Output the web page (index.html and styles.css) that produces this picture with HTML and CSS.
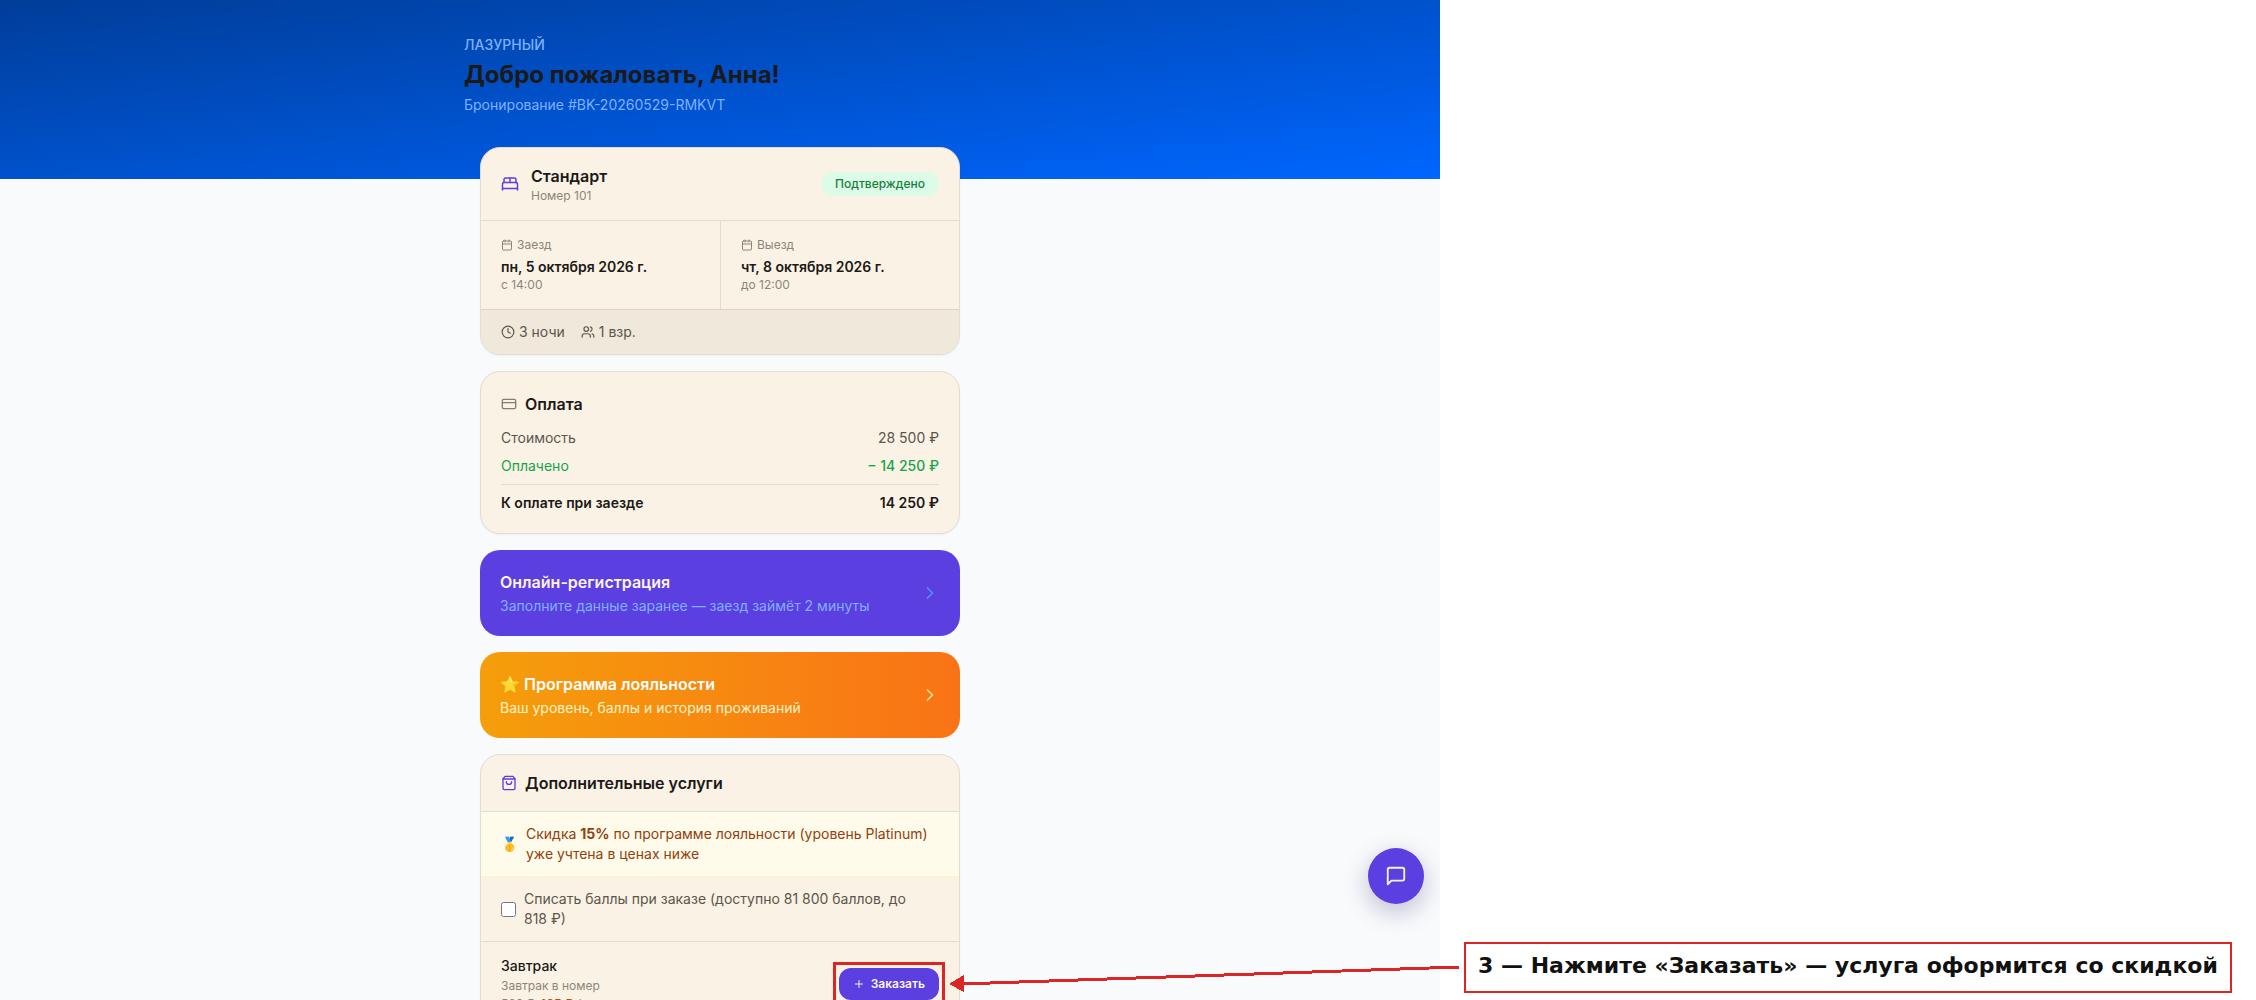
FILE: index.html
```html
<!DOCTYPE html>
<html lang="ru">
<head>
  <meta charset="UTF-8" />
  <meta name="viewport" content="width=device-width, initial-scale=1.0"/>
  <title>Лазурный — бронирование</title>
  <link rel="stylesheet" href="styles.css">
</head>
<body>
  <div class="page">
    <div class="app">
      <header class="hero">
        <div class="hero-inner">
          <p class="hotel">Лазурный</p>
          <h1>Добро пожаловать, Анна!</h1>
          <p class="booking">Бронирование #BK-20260529-RMKVT</p>
        </div>
      </header>

      <main class="cards">
        <!-- Room -->
        <section class="card">
          <div class="room">
            <svg class="icon accent" width="18" height="18" viewBox="0 0 24 24"><path d="M2 20v-8a2 2 0 0 1 2-2h16a2 2 0 0 1 2 2v8"/><path d="M4 10V6a2 2 0 0 1 2-2h12a2 2 0 0 1 2 2v4"/><path d="M12 4v6"/><path d="M2 18h20"/></svg>
            <div class="room-name">
              <h2>Стандарт</h2>
              <p class="small">Номер 101</p>
            </div>
            <span class="badge">Подтверждено</span>
          </div>
          <div class="dates">
            <div class="date">
              <p class="small label"><svg class="icon" width="12" height="12" viewBox="0 0 24 24"><path d="M8 2v4"/><path d="M16 2v4"/><rect width="18" height="18" x="3" y="4" rx="2"/><path d="M3 10h18"/></svg>Заезд</p>
              <p class="day">пн, 5 октября 2026 г.</p>
              <p class="small">с 14:00</p>
            </div>
            <div class="date">
              <p class="small label"><svg class="icon" width="12" height="12" viewBox="0 0 24 24"><path d="M8 2v4"/><path d="M16 2v4"/><rect width="18" height="18" x="3" y="4" rx="2"/><path d="M3 10h18"/></svg>Выезд</p>
              <p class="day">чт, 8 октября 2026 г.</p>
              <p class="small">до 12:00</p>
            </div>
          </div>
          <div class="stay">
            <span><svg class="icon" width="14" height="14" viewBox="0 0 24 24"><circle cx="12" cy="12" r="10"/><path d="M12 6v6l4 2"/></svg>3 ночи</span>
            <span><svg class="icon" width="14" height="14" viewBox="0 0 24 24"><path d="M16 21v-2a4 4 0 0 0-4-4H6a4 4 0 0 0-4 4v2"/><circle cx="9" cy="7" r="4"/><path d="M22 21v-2a4 4 0 0 0-3-3.87"/><path d="M16 3.13a4 4 0 0 1 0 7.75"/></svg>1 взр.</span>
          </div>
        </section>

        <!-- Payment -->
        <section class="card payment">
          <div class="title">
            <svg class="icon muted" width="16" height="16" viewBox="0 0 24 24"><rect width="20" height="14" x="2" y="5" rx="2"/><path d="M2 10h20"/></svg>
            <h2>Оплата</h2>
          </div>
          <dl>
            <div class="row"><dt>Стоимость</dt><dd>28 500 ₽</dd></div>
            <div class="row paid"><dt>Оплачено</dt><dd>− 14 250 ₽</dd></div>
            <div class="row total"><dt>К оплате при заезде</dt><dd>14 250 ₽</dd></div>
          </dl>
        </section>

        <a class="banner checkin" href="#checkin">
          <div>
            <h2>Онлайн-регистрация</h2>
            <p>Заполните данные заранее — заезд займёт 2 минуты</p>
          </div>
          <svg class="icon" width="20" height="20" viewBox="0 0 24 24"><path d="m9 18 6-6-6-6"/></svg>
        </a>

        <a class="banner loyalty" href="#loyalty">
          <div>
            <h2>⭐ Программа лояльности</h2>
            <p>Ваш уровень, баллы и история проживаний</p>
          </div>
          <svg class="icon" width="20" height="20" viewBox="0 0 24 24"><path d="m9 18 6-6-6-6"/></svg>
        </a>

        <!-- Extra services -->
        <section class="card">
          <div class="title services-title">
            <svg class="icon accent" width="16" height="16" viewBox="0 0 24 24"><path d="M6 2 3 6v14a2 2 0 0 0 2 2h14a2 2 0 0 0 2-2V6l-3-4Z"/><path d="M3 6h18"/><path d="M16 10a4 4 0 0 1-8 0"/></svg>
            <h2>Дополнительные услуги</h2>
          </div>
          <div class="discount">
            <span>🥇</span>
            <p>Скидка <b>15%</b> по программе лояльности (уровень Platinum) уже учтена в ценах ниже</p>
          </div>
          <label class="points" for="usePoints">
            <input type="checkbox" id="usePoints">
            <span>Списать баллы при заказе (доступно 81 800 баллов, до 818&nbsp;₽)</span>
          </label>
          <div class="service">
            <div>
              <h3>Завтрак</h3>
              <p class="small">Завтрак в номер</p>
              <p class="small"><s>500 ₽</s> <b class="price">425 ₽</b> /</p>
            </div>
            <div class="target">
              <button class="order" type="button"><svg class="icon" width="12" height="12" viewBox="0 0 24 24"><path d="M5 12h14"/><path d="M12 5v14"/></svg>Заказать</button>
            </div>
          </div>
        </section>
      </main>

      <button class="chat" type="button" aria-label="Чат">
        <svg class="icon" width="22" height="22" viewBox="0 0 24 24"><path d="M21 15a2 2 0 0 1-2 2H7l-4 4V5a2 2 0 0 1 2-2h14a2 2 0 0 1 2 2z"/></svg>
      </button>
    </div>

    <aside class="notes">
      <p class="note">3 — Нажмите «Заказать» — услуга оформится со скидкой</p>
    </aside>

    <svg class="arrow" width="510" height="30" viewBox="0 0 510 30" shape-rendering="crispEdges"><path d="M12 14 510 -3" /><path class="head" d="M0 14 15 5v17z"/></svg>
  </div>
</body>
</html>
```
FILE: styles.css
```css
* { box-sizing: border-box; }
body { margin: 0; background: #fff; color: #1c1917; font-family: Inter, "Noto Sans", sans-serif; font-size: 14px; line-height: 20px; }
h1, h2, h3, p, dl, dd { margin: 0; }
h2 { font-size: 16px; line-height: 24px; font-weight: 600; }
h3 { font-size: 14px; line-height: 20px; font-weight: 500; }
button { font-family: inherit; border: 0; cursor: pointer; }
.icon { flex-shrink: 0; fill: none; stroke: currentColor; stroke-width: 2; stroke-linecap: round; stroke-linejoin: round; }
.accent { color: #5b3fe0; }
.muted { color: #857d72; }
.small { font-size: 12px; line-height: 16px; color: #8c857b; }

.page { position: relative; display: grid; grid-template-columns: 1440fr 816fr; height: 100vh; overflow: hidden; }
.app { position: relative; background: #f8fafc; min-width: 0; height: 100vh; overflow: hidden; }

.hero { padding: 35px 16px 64px; background: linear-gradient(to bottom right, #003d99, #0066ff); color: #7fb0ff; }
.hero-inner { max-width: 512px; margin: 0 auto; }
.hotel { font-weight: 500; text-transform: uppercase; }
h1 { margin: 4px 0; font-size: 24px; line-height: 32px; font-weight: 700; color: #1c1917; }

.cards { position: relative; max-width: 512px; margin: -32px auto 0; padding: 0 16px; display: flex; flex-direction: column; gap: 16px; }
.card { background: #faf3e5; border: 1px solid #e3dccf; border-radius: 20px; overflow: hidden; box-shadow: 0 1px 2px rgba(0, 0, 0, 0.05); }

.room { display: flex; align-items: center; gap: 12px; padding: 16px 20px; }
.room-name { flex: 1; }
.badge { padding: 4px 14px; border-radius: 12px; background: #dcfce7; color: #15803d; font-size: 12px; line-height: 16px; font-weight: 500; }
.dates { display: grid; grid-template-columns: 1fr 1fr; border-top: 1px solid #e3dccf; }
.date { padding: 16px 20px; }
.date + .date { border-left: 1px solid #e3dccf; }
.label { display: flex; align-items: center; gap: 4px; margin-bottom: 4px; }
.day { font-weight: 600; }
.stay { display: flex; gap: 16px; padding: 12px 20px; background: #f0e8db; border-top: 1px solid #ddd3c3; color: #5c554c; }
.stay span { display: flex; align-items: center; gap: 4px; }

.payment { padding: 20px; }
.title { display: flex; align-items: center; gap: 8px; }
dl { display: flex; flex-direction: column; gap: 8px; margin-top: 12px; }
.row { display: flex; justify-content: space-between; color: #5c554c; }
.paid { color: #16a34a; }
.paid dd { font-weight: 500; }
.total { padding-top: 8px; border-top: 1px solid #e3dccf; color: #1c1917; font-weight: 600; }

.banner { display: flex; align-items: center; justify-content: space-between; padding: 20px; border-radius: 20px; text-decoration: none; }
.banner p { margin-top: 2px; }
.checkin { background: #5b3fe0; color: #faf3e5; }
.checkin p { color: #80b0ff; }
.checkin .icon { color: #4d90ff; }
.loyalty { background: linear-gradient(to right, #f59e0b, #f97316); color: #fff; }
.loyalty p { color: #fef3c7; }
.loyalty .icon { color: #fde68a; }

.services-title { padding: 16px 20px; border-bottom: 1px solid #e3dccf; }
.discount, .points { display: flex; align-items: center; gap: 8px; padding: 12px 20px; }
.discount { background: #fffbeb; border-bottom: 1px solid #fef3c7; color: #92400e; }
.points { border-bottom: 1px solid #e3dccf; color: #5c554c; }
.points input { flex-shrink: 0; width: 15px; height: 15px; margin: 0; }
.service { display: flex; align-items: center; justify-content: space-between; padding: 14px 20px; }
.service .small { margin-top: 2px; }
.price { color: #b45309; font-weight: 600; }
.order { display: flex; align-items: center; gap: 6px; padding: 8px 14px; border-radius: 12px; background: #5b3fe0; color: #faf3e5; font-size: 12px; line-height: 16px; font-weight: 600; }

.chat { position: absolute; right: 16px; bottom: 96px; width: 56px; height: 56px; padding: 0; display: flex; align-items: center; justify-content: center; border-radius: 50%; background: #5b3fe0; color: #faf3e5; box-shadow: 0 8px 24px rgba(28, 16, 80, 0.25); }

/* walkthrough hint */
.target { position: relative; }
.target::after { content: ""; position: absolute; inset: -6px; border: 3px solid #dc2626; pointer-events: none; }
.notes { display: flex; flex-direction: column; justify-content: flex-end; align-items: flex-start; padding: 0 22px 7px 24px; }
.note { padding: 9px 12px 12px; border: 2px solid #dc2626; color: #111; font-family: "DejaVu Sans", sans-serif; font-size: 22px; line-height: 26px; font-weight: 700; white-space: nowrap; }
.arrow { position: absolute; left: 949px; bottom: 0; overflow: visible; pointer-events: none; }
.arrow path { fill: none; stroke: #dc2626; stroke-width: 3; }
.arrow .head { fill: #dc2626; stroke: none; }
```
